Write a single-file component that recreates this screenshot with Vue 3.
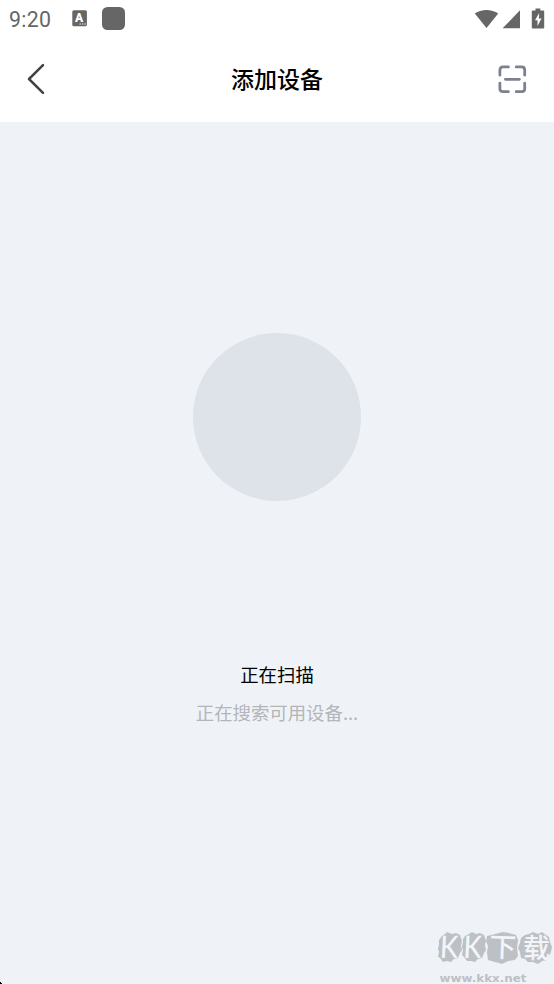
<script setup>
const title = '添加设备'
</script>

<template>
  <main class="screen">
    <header class="top">
      <div class="status">
        <span class="time">9:20</span>
        <svg class="key" width="16" height="17" viewBox="0 0 16 17">
          <rect x="0.3" y="0.3" width="14.6" height="16" rx="1.5" fill="#666" />
          <text class="keytext" x="7.2" y="11.5" text-anchor="middle">A</text>
          <path d="M7.5 14h1.3M10 14h1.3M12.4 14h1.3" stroke="#fff" stroke-width="1.2" />
        </svg>
        <span class="square"></span>
        <span class="spacer"></span>
        <svg width="80" height="24" viewBox="474 6.4 80 24" fill="#666">
          <path d="M474.8 13C481 8.300 492 8.300 498.200 13L486.500 27.500Z" />
          <path d="M520 9.700V27.700H502.600Z" />
          <path d="M535.500 8h4.800v2h3.200q.7 0 .7.800v16q0 1-.9 1h-10.600q-.9 0-.9-1v-16q0-.8.8-.8h2.900z" />
          <path d="M539.200 12.500L535 19.700h2.500v5.600l4-7.500h-2.600z" fill="#fff" />
        </svg>
      </div>
      <nav class="bar">
        <svg class="back" width="20" height="32" viewBox="0 0 20 32">
          <path d="M17 2.200L3 16L17 29.800" />
        </svg>
        <h1>{{ title }}</h1>
        <svg class="scan" width="30" height="30" viewBox="0.3 0.3 30 30">
          <path d="M2.200 10.500V5.200q0-3 3-3h5.500M18.500 2.200H24q3 0 3 3v5.300M27 18.500V24q0 3-3 3h-5.500M10.700 27H5.200q-3 0-3-3v-5.500M7.700 14.600h14" />
        </svg>
      </nav>
    </header>

    <section class="content">
      <div class="disc"></div>
      <p class="heading">正在扫描</p>
      <p class="hint">正在搜索可用设备...</p>
    </section>

    <svg class="mark" width="124" height="60" viewBox="430 924 124 60">
      <g fill="#bdc0c4">
        <path d="M442 936l3-2 2-2 5 2 4-1 4 2 2 6-1 4 1 5-2 3-2 5-4 1-3 3-4-1-4 1-3-4-2-1 1-5-1-3 1-5 0-4z" />
        <path d="M465 936l4-2 3-2 4 2 4-1 4 2 2 6-1 4 1 5-2 3-2 5-4 1-3 3-4-1-4 0-3-4-2-2 1-5-1-3 1-5 0-3z" />
        <path d="M487 936l8-2 8-2 6 1 7 2 2 5-1 8 1 8-3 4-7 1-6 3-7-2-7-2-1-8 1-6-2-5z" />
        <path d="M521 938l4-3 4-1 4-2 5 2 4-2 4 3 3 2 1 5 2 5-1 5-2 4-2 4-5 1-4 3-5-2-5 0-3-3-4-1-1-6-2-4 2-5z" />
      </g>
      <g class="letters">
        <text transform="translate(439.500 957.500) skewX(-3) scale(.87 1)">K</text>
        <text transform="translate(463 957.500) skewX(-3) scale(.87 1)">K</text>
        <text class="han" transform="translate(489 956.500) rotate(2)">下</text>
        <text class="han" transform="translate(523 957.500)">载</text>
      </g>
      <text class="url" x="439.500" y="981.500" textLength="87" lengthAdjust="spacingAndGlyphs">www.kkx.net</text>
    </svg>
    <span class="corner"></span>
  </main>
</template>

<style>
body { background: #eff3f8; }
</style>

<style scoped>
.screen {
  position: relative;
  height: 984px;
  overflow: hidden;
  background: #eff3f8;
  font-family: "Noto Sans CJK SC", sans-serif;
}
.top { height: 121.500px; background: #fff; }
.status {
  display: flex;
  align-items: center;
  height: 37px;
  padding-left: 9px;
}
.time {
  width: 63px;
  padding-top: 1px;
  font: 400 21.300px/37px Roboto, sans-serif;
  color: #666;
  letter-spacing: .3px;
}
.key { flex: none; }
.keytext { font: 900 12px Roboto, sans-serif; fill: #fff; }
.square {
  width: 23.500px;
  height: 23.500px;
  margin-left: 13.500px;
  border-radius: 5.500px;
  background: #666;
}
.spacer { flex: 1; }
.bar {
  display: flex;
  align-items: center;
  justify-content: space-between;
  height: 84px;
  padding: 0 26px 0 26px;
}
.back path { fill: none; stroke: #424242; stroke-width: 2.500; stroke-linecap: round; stroke-linejoin: round; }
.scan { margin-top: 1px; }
.scan path { fill: none; stroke: #7c828d; stroke-width: 2.800; stroke-linecap: round; }
h1 {
  margin: -2px 0 0 10px;
  font-size: 23px;
  font-weight: 500;
  line-height: 34px;
  color: #000;
}
.content {
  display: flex;
  flex-direction: column;
  align-items: center;
  padding-top: 211.500px;
}
.disc {
  width: 168px;
  height: 168px;
  border-radius: 50%;
  background: #dee2e9;
}
p { margin: 0; font-size: 18.400px; line-height: 28px; }
.heading { margin-top: 159px; color: #000; }
.hint { margin-top: 10px; color: #b3b5b9; }
.mark { position: absolute; right: 0; bottom: 0; }
.letters { fill: #f2f5f9; font: 500 31px Lato, sans-serif; }
.han { font: 500 27px "Noto Sans CJK SC", sans-serif; }
.url { fill: #bdc0c4; font: 700 11px "DejaVu Sans", sans-serif; }
.corner {
  position: absolute;
  left: 0;
  bottom: 0;
  width: 2px;
  height: 3px;
  background: linear-gradient(35deg, #000 45%, transparent 55%);
}
</style>
